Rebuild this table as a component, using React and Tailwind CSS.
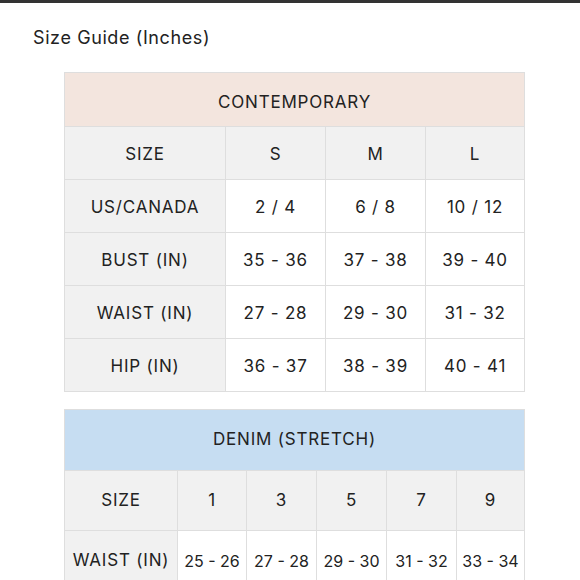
import React from "react";

const contemporary = [
    ["SIZE", "S", "M", "L"],
    ["US/CANADA", "2 / 4", "6 / 8", "10 / 12"],
    ["BUST (IN)", "35 - 36", "37 - 38", "39 - 40"],
    ["WAIST (IN)", "27 - 28", "29 - 30", "31 - 32"],
    ["HIP (IN)", "36 - 37", "38 - 39", "40 - 41"],
];

const denim = [
    ["SIZE", "1", "3", "5", "7", "9"],
    ["WAIST (IN)", "25 - 26", "27 - 28", "29 - 30", "31 - 32", "33 - 34"],
];

const SizeTable = props => (
    <table className="w-[460px] table-fixed border-collapse text-[#222]">
        <colgroup>
            {props.widths.map((w, i) => <col key={i} style={{width: w}} />)}
        </colgroup>
        <thead>
            <tr className={props.headerHeight}>
                <th colSpan={props.widths.length} className={`${props.headerColor} ${props.headerPad} border border-[#dedede] font-normal text-[17px] tracking-[0.8px]`}>
                    {props.title}
                </th>
            </tr>
        </thead>
        <tbody>
            {props.rows.map((row, r) => (
                <tr key={r} className={props.rowHeight}>
                    {row.map((cell, c) => (
                        <td
                            key={c}
                            className={`border border-[#dedede] text-center whitespace-nowrap ${props.cellPad} ${c === 0 || r === 0 || !props.narrow ? "text-[17px] tracking-[0.8px]" : "text-[16px]"} ${r === 0 || c === 0 ? "bg-[#f1f1f1]" : "bg-white"}`}
                        >
                            {cell}
                        </td>
                    ))}
                </tr>
            ))}
        </tbody>
    </table>
);

export default function App() {
    return (
        <div className="w-[580px] h-[580px] overflow-hidden bg-white font-['Inter','Open_Sans',sans-serif]">
            <div className="h-[3px] bg-[#333]" />
            <h1 className="mt-[23px] ml-[33px] text-[18px] leading-6 tracking-[0.6px] text-[#222] font-normal">Size Guide (Inches)</h1>
            <div className="mt-[22px] ml-[64px] flex flex-col gap-[17px]">
                <SizeTable
                    title="CONTEMPORARY"
                    headerColor="bg-[#f3e5de]"
                    headerHeight="h-[54px]"
                    rowHeight="h-[53px]"
                    headerPad="pt-[7px]"
                    cellPad="pt-[4px]"
                    widths={[161, 100, 100, 99]}
                    rows={contemporary}
                />
                <SizeTable
                    title="DENIM (STRETCH)"
                    headerColor="bg-[#c6ddf2]"
                    headerHeight="h-[61px]"
                    rowHeight="h-[60px]"
                    headerPad=""
                    cellPad=""
                    narrow={true}
                    widths={[113, 69, 70, 70, 70, 68]}
                    rows={denim}
                />
            </div>
        </div>
    );
}
